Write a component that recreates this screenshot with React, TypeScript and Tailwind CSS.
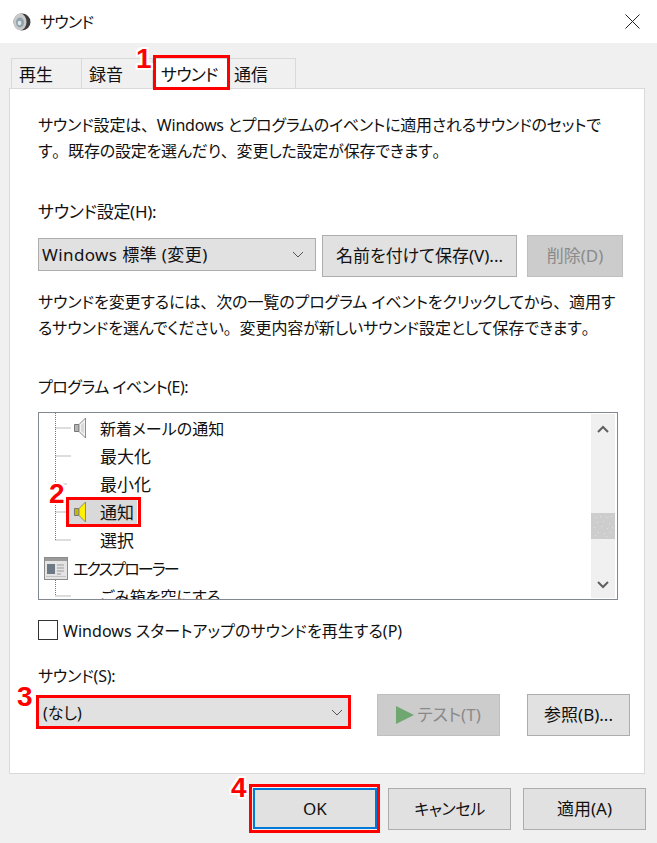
import React from 'react';

const RED = 'absolute border-[3px] border-[#ff0000] pointer-events-none z-20';
const NUM =
  "absolute z-30 font-['Liberation_Sans',sans-serif] font-bold text-[28px] leading-[28px] text-[#ff0000] [text-shadow:-2px_0_0_#fff,2px_0_0_#fff,0_-2px_0_#fff,0_2px_0_#fff,-2px_-2px_0_#fff,2px_2px_0_#fff,-2px_2px_0_#fff,2px_-2px_0_#fff]";

// full-width punctuation, the rest of the page runs proportional
const P = ({ c }: { c: string }) => <span className="[font-feature-settings:normal]">{c}</span>;

const Chevron = () => (
  <svg width="12" height="7" viewBox="0 0 12 7" fill="none" stroke="#555" strokeWidth="1">
    <path d="M1 1l5 5 5-5" />
  </svg>
);

const Speaker = ({ active = false }: { active?: boolean }) => (
  <svg width="13" height="22" viewBox="0 0 13 22" className="shrink-0">
    <path d="M0.5 7.5h4.5v7h-4.5z" fill={active ? '#c9b800' : '#b5b5b5'} stroke="#777" />
    <path d="M5 7.5L11.5 1v20L5 14.5z" fill={active ? '#ffee00' : '#f2f2f2'} stroke="#8a8a8a" />
    <path d="M7 8l3-3v12l-3-3z" fill={active ? '#fff200' : '#d8d8d8'} />
  </svg>
);

const WindowIcon = () => (
  <svg width="24" height="23" viewBox="0 0 24 23" className="shrink-0">
    <rect x="0.5" y="0.5" width="23" height="22" fill="#e4e4e4" stroke="#8c8c8c" />
    <rect x="1" y="1" width="22" height="3" fill="#9a9a9a" />
    <rect x="3" y="7" width="8" height="10" fill="#6d7a86" />
    <path d="M13 8h7M13 11h7M13 14h7M13 17h4" stroke="#9a9a9a" strokeWidth="1" />
    <rect x="2" y="19" width="20" height="1" fill="#c4c4c4" />
  </svg>
);

const TitleIcon = () => (
  <svg width="19" height="20" viewBox="0 0 19 20" className="shrink-0">
    <circle cx="9" cy="10" r="8.5" fill="#3d3d3d" />
    <ellipse cx="7" cy="10" rx="6.5" ry="8.5" fill="#c9c9c9" />
    <ellipse cx="7" cy="10.5" rx="4" ry="5" fill="#8ea3ad" />
    <ellipse cx="6.5" cy="11" rx="1.8" ry="2.2" fill="#dfe7ea" />
  </svg>
);

const Tab = ({ label, w, pl, active = false }: { label: string; w: string; pl: string; active?: boolean }) => (
  <div
    className={`${w} ${pl} h-[31px] border border-[#d9d9d9] text-[17px] leading-[31px] whitespace-nowrap ${
      active ? 'bg-white border-b-0 relative z-10 text-[16px] tracking-[-0.8px]' : 'bg-[#f0f0f0] border-l-0 first:border-l'
    }`}
  >
    {label}
  </div>
);

const Btn = ({ children, className = '' }: { children: React.ReactNode; className?: string }) => (
  <div
    className={`h-[42px] flex items-center justify-center border border-[#adadad] bg-[#e1e1e1] text-[17px] ${className}`}
  >
    {children}
  </div>
);

const Row = ({ label, speaker, active, cls = 'text-[17px]' }: { label: string; speaker?: boolean; active?: boolean; cls?: string }) => (
  <div className="h-[28px] flex items-center pl-[28px]">
    <div className={`h-[28px] flex items-center pl-[7px] pr-[3px] ${active ? 'bg-[#d9d9d9]' : ''}`}>
      <div className="w-[13px] flex items-center">{speaker && <Speaker active={active} />}</div>
      <span className={`ml-[13px] leading-[24px] pt-px whitespace-nowrap ${cls}`}>{label}</span>
    </div>
  </div>
);

export default function App() {
  return (
    <div className="relative w-[657px] h-[843px] overflow-hidden bg-[#f0f0f0] text-[#111] [font-feature-settings:'palt'] font-['Noto_Sans','Noto_Sans_CJK_JP',sans-serif]">
      {/* Title bar */}
      <div className="h-[43px] bg-white flex items-center pl-[13px] pr-[17px]">
        <TitleIcon />
        <span className="ml-[8px] text-[16px] tracking-[-0.8px]">サウンド</span>
        <svg width="15" height="15" viewBox="0 0 15 15" className="ml-auto" stroke="#222" strokeWidth="1">
          <path d="M0.5 0.5l14 14M14.5 0.5l-14 14" />
        </svg>
      </div>

      {/* Tabs */}
      <div className="mt-[15px] ml-[11px] flex h-[30px]">
        <Tab label="再生" w="w-[71px]" pl="pl-[7px]" />
        <Tab label="録音" w="w-[71px]" pl="pl-[7px]" />
        <Tab label="サウンド" w="w-[76px]" pl="pl-[7px]" active />
        <Tab label="通信" w="w-[67px]" pl="pl-[5px]" />
      </div>

      {/* Panel */}
      <div className="ml-[9px] w-[636px] h-[686px] border border-[#d9d9d9] bg-white pl-[28px]">
        <p className="pt-[23px] text-[16px] leading-[26px] tracking-[-0.2px] whitespace-nowrap">
          サウンド設定は<P c="、" />Windows とプログラムのイベントに適用されるサウンドのセットで
          <br />
          す<P c="。" />既存の設定を選んだり<P c="、" />変更した設定が保存できます<P c="。" />
        </p>

        <div className="mt-[36px] text-[17px] tracking-[-0.3px] leading-[24px]">サウンド設定(H):</div>
        <div className="mt-[11px] flex items-start">
          <div className="mt-[3px] w-[278px] h-[33px] border border-[#adadad] bg-[#e1e1e1] flex items-center justify-between pl-[3px] pr-[11px] text-[17px] tracking-[0.4px]">
            <span>Windows 標準 (変更)</span>
            <Chevron />
          </div>
          <Btn className="ml-[6px] w-[195px]">名前を付けて保存(V)...</Btn>
          <Btn className="ml-[10px] w-[96px] !bg-[#cccccc] !border-[#bfbfbf] text-[#8a8a8a]">削除(D)</Btn>
        </div>

        <p className="mt-[12px] text-[16px] leading-[26px] tracking-[-0.1px] whitespace-nowrap">
          サウンドを変更するには<P c="、" />次の一覧のプログラム イベントをクリックしてから<P c="、" />適用す
          <br />
          るサウンドを選んでください<P c="。" />変更内容が新しいサウンド設定として保存できます<P c="。" />
        </p>

        <div className="mt-[34px] text-[16px] tracking-[-0.5px] leading-[24px]">プログラム イベント(E):</div>

        {/* Event list */}
        <div className="mt-[13px] w-[580px] h-[188px] border border-[#828790] bg-white relative overflow-hidden">
          <svg className="absolute left-0 top-0 z-10" width="40" height="186" fill="none" stroke="#777" strokeDasharray="1 1">
            <path d="M16.5 0v127M16.5 15h15M16.5 43h15M16.5 71h11M16.5 99h11M16.5 127h15M16.5 167v16M16.5 183h15" />
          </svg>
          <div className="pt-px">
            <Row label="新着メールの通知" speaker cls="text-[16px]" />
            <Row label="最大化" />
            <Row label="最小化" />
            <Row label="通知" speaker active />
            <Row label="選択" />
            <div className="h-[28px] flex items-center pl-[5px]">
              <WindowIcon />
              <span className="ml-[5px] pt-px text-[16px] tracking-[-1.8px]">エクスプローラー</span>
            </div>
            <Row label="ごみ箱を空にする" cls="text-[16px]" />
          </div>

          {/* Scrollbar */}
          <div className="absolute right-[2px] top-px bottom-px w-[24px] bg-[#f0f0f0] flex flex-col items-center">
            <svg width="12" height="8" viewBox="0 0 12 8" className="mt-[11px]" fill="none" stroke="#606060" strokeWidth="2">
              <path d="M1 7l5-5 5 5" />
            </svg>
            <div className="mt-[80px] w-full h-[26px] bg-[#cdcdcd]">
              <svg width="24" height="26" fill="#e2e2e2">
                <path d="M4 4h1v1H4zM9 3h1v1H9zM15 4h1v1h-1zM20 3h1v1h-1zM6 9h1v1H6zM12 8h1v1h-1zM18 10h1v1h-1zM3 14h1v1H3zM10 13h1v1h-1zM16 15h1v1h-1zM21 14h1v1h-1zM7 19h1v1H7zM13 20h1v1h-1zM19 19h1v1h-1zM4 22h1v1H4zM15 23h1v1h-1z" />
              </svg>
            </div>
            <svg width="12" height="8" viewBox="0 0 12 8" className="mt-[42px]" fill="none" stroke="#606060" strokeWidth="2">
              <path d="M1 1l5 5 5-5" />
            </svg>
          </div>
        </div>

        <div className="mt-[20px] h-[20px] flex items-center">
          <div className="w-[20px] h-[20px] border border-[#333] bg-white" />
          <span className="ml-[5px] pt-px text-[16px] tracking-[0.05px]">Windows スタートアップのサウンドを再生する(P)</span>
        </div>

        <div className="mt-[24px] text-[16px] tracking-[-0.2px] leading-[24px]">サウンド(S):</div>
        <div className="mt-[6px] flex items-start">
          <div className="mt-[4px] ml-px w-[309px] h-[29px] bg-[#e1e1e1] flex items-center justify-between pl-[4px] pr-[5px] text-[16px]">
            <span>(なし)</span>
            <Chevron />
          </div>
          <Btn className="ml-[29px] w-[123px] !bg-[#cccccc] !border-[#bfbfbf] text-[#8a8a8a]">
            <svg width="18" height="18" viewBox="0 0 18 18" className="mr-[3px]">
              <path d="M0 0l18 9-18 9z" fill="#70a670" />
            </svg>
            テスト(T)
          </Btn>
          <Btn className="ml-[27px] w-[103px]">参照(B)...</Btn>
        </div>
      </div>

      {/* Footer */}
      <div className="mt-[14px] ml-[253px] flex">
        <Btn className="w-[124px] !h-[41px] !border-2 !border-[#0078d7]">OK</Btn>
        <Btn className="ml-[11px] w-[123px] !text-[16px] tracking-[-0.4px]">キャンセル</Btn>
        <Btn className="ml-[12px] w-[123px]">適用(A)</Btn>
      </div>

      {/* Annotations */}
      <div className={`${RED} left-[153px] top-[55px] w-[77px] h-[35px]`} />
      <div className={`${RED} left-[66px] top-[497px] w-[75px] h-[30px]`} />
      <div className={`${RED} left-[36px] top-[695px] w-[315px] h-[34px]`} />
      <div className={`${RED} left-[249px] top-[784px] w-[131px] h-[49px]`} />
      <span className={`${NUM} left-[136px] top-[45px]`}>1</span>
      <span className={`${NUM} left-[49px] top-[480px]`}>2</span>
      <span className={`${NUM} left-[17px] top-[683px]`}>3</span>
      <span className={`${NUM} left-[231px] top-[774px]`}>4</span>
    </div>
  );
}
